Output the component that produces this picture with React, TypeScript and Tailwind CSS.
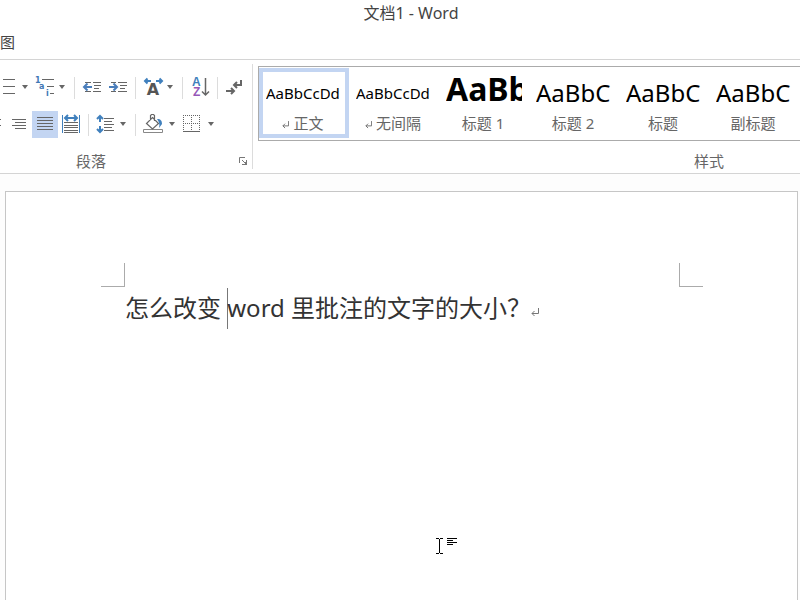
import type { ReactNode } from "react"

const styles = [
  { name: "正文", sample: "AaBbCcDd", size: "text-[15px]", mark: true, active: true },
  { name: "无间隔", sample: "AaBbCcDd", size: "text-[15px]", mark: true },
  { name: "标题 1", sample: "AaBb", size: "pb-2 text-[32px] font-bold" },
  { name: "标题 2", sample: "AaBbC", size: "text-2xl" },
  { name: "标题", sample: "AaBbC", size: "text-2xl" },
  { name: "副标题", sample: "AaBbC", size: "text-2xl" },
]

function Tool({ label, width, active, children }: { label: string; width: number; active?: boolean; children: ReactNode }) {
  return (
    <button type="button" aria-label={label} title={label} className={active ? "shrink-0 bg-[#c3d5f2]" : "shrink-0 hover:bg-[#e3ecf9]"}>
      <svg width={width} height="27" viewBox={`0 0 ${width} 27`} fill="none" stroke="#666" className="block">
        {children}
      </svg>
    </button>
  )
}

function Caret({ x }: { x: number }) {
  return <path d={`M${x} 11h6l-3 4z`} fill="#666" stroke="none" />
}

function Separator() {
  return <span className="mx-1 h-[22px] w-px shrink-0 bg-[#dcdcdc]" />
}

function ReturnMark({ className }: { className: string }) {
  return (
    <svg viewBox="0 0 8 9" className={className} fill="none" stroke="currentColor" aria-hidden="true">
      <path d="M7.5 0v5.5H1M3.5 3L1 5.5 3.5 8" />
    </svg>
  )
}

function ParagraphGroup() {
  return (
    <section aria-label="段落" className="flex w-[252px] shrink-0 flex-col">
      <div className="mt-[14px] flex h-[27px] items-center">
        <Tool label="编号" width={32}>
          <path d="M3 5.5h12M3 12.5h12M3 19.5h12" />
          <Caret x={22} />
        </Tool>
        <Tool label="多级列表" width={38}>
          <path d="M10 5.5h12M15 12.5h7M18 19.5h4" />
          <g fill="#3f78b5" stroke="none" className="font-['DejaVu_Sans'] text-[8px] font-bold">
            <text x="3" y="9">1</text>
            <text x="7" y="15">a</text>
            <text x="14" y="22">i</text>
          </g>
          <Caret x={27} />
        </Tool>
        <Separator />
        <Tool label="减少缩进量" width={26}>
          <path d="M6 8.5h6M14 8.5h8M15 11.5h7M15 14.5h5M6 17.5h6M14 17.5h8" />
          <path d="M5 13h8M8.500 9.500L5 13l3.500 3.500" stroke="#4a7ebb" strokeWidth="2" />
        </Tool>
        <Tool label="增加缩进量" width={26}>
          <path d="M6 8.5h5M13 8.5h9M15 11.5h7M15 14.5h5M6 17.5h5M13 17.5h9" />
          <path d="M4 13h8M8.500 9.500L12 13l-3.500 3.500" stroke="#4a7ebb" strokeWidth="2" />
        </Tool>
        <Separator />
        <Tool label="中文版式" width={38}>
          <path d="M5 7h6M7.500 4.500L5 7l2.500 2.500M16 7h6M19.500 4.500L22 7l-2.500 2.500" stroke="#4080bd" strokeWidth="2" />
          <text x="13" y="21" textAnchor="middle" fill="#555" stroke="none" className="font-['DejaVu_Sans'] text-[16px] font-bold">A</text>
          <Caret x={27} />
        </Tool>
        <Separator />
        <Tool label="排序" width={26}>
          <g stroke="none" className="font-['Liberation_Sans'] text-[12px] font-bold">
            <text x="5" y="12" fill="#4080bd">A</text>
            <text x="6" y="22" fill="#9657b8">Z</text>
          </g>
          <path d="M18.500 4v17M15 17.500l3.500 3.500 3.500-3.500" strokeWidth="1.500" />
        </Tool>
        <Separator />
        <Tool label="显示编辑标记" width={26}>
          <path d="M19 6v5h-7M15 8l-3 3 3 3M4 17h8M9 14l3 3-3 3" strokeWidth="2" />
        </Tool>
      </div>

      <div className="mt-[10px] flex h-[27px] items-center">
        <Tool label="居中" width={6}>
          <path d="M0 8.500h1M0 14.500h1" />
        </Tool>
        <Tool label="右对齐" width={26}>
          <path d="M6 8.500h14M9 11.500h11M6 14.500h14M9 17.500h11" />
        </Tool>
        <Tool label="两端对齐" width={26} active>
          <path d="M5 6.500h16M5 9.500h16M5 12.500h16M5 15.500h16M5 18.500h16" />
        </Tool>
        <Tool label="分散对齐" width={26}>
          <path d="M4.500 4v18M21.500 4v18" stroke="#4080bd" />
          <path d="M7 7h12M10 4L7 7l3 3M16 4l3 3-3 3" stroke="#4080bd" strokeWidth="2" />
          <path d="M6 11.500h14M6 14.500h14M6 16.500h14M6 19.500h14M6 21.500h14" />
        </Tool>
        <Separator />
        <Tool label="行距" width={38}>
          <path d="M11 7.500h10M11 10.500h8M11 13.500h10M11 16.500h8M11 19.500h10" />
          <path d="M7 5v6M4 8l3-3 3 3M7 15v6M4 18l3 3 3-3" stroke="#4080bd" strokeWidth="2" />
          <Caret x={27} />
        </Tool>
        <Separator />
        <Tool label="底纹" width={38}>
          <path d="M3.500 18.500h19v3h-19z" stroke="#888" />
          <path d="M12.500 6.500l6 6-6 5.500-6-5.500zM10.500 9V4.500l1-1h2l1 1V10" strokeWidth="1.200" />
          <path d="M17 8c4 0 5 2 5 5l-3 4c1-4 0-6-2-9z" fill="#4080bd" stroke="none" />
          <Caret x={29} />
        </Tool>
        <Tool label="边框" width={38}>
          <path d="M5 4.500h17M5 12.500h17M5.500 4v16M13.500 4v16M21.500 4v16" strokeDasharray="1 1" />
          <path d="M5 20.500h17" />
          <Caret x={30} />
        </Tool>
      </div>

      <footer className="mt-[13px] flex h-5 items-center">
        <span className="w-[182px] text-center text-[15px] text-[#666]">段落</span>
        <button type="button" aria-label="段落设置" className="ml-auto mr-[5px]">
          <svg width="8" height="8" viewBox="0 0 8 8" fill="none" stroke="#777" className="block">
            <path d="M.5 6V.5H6M3 3l3 3" />
            <path d="M7.500 3v5M3 7.500h5M6.500 5v2" />
          </svg>
        </button>
      </footer>
    </section>
  )
}

function StyleGallery() {
  return (
    <section aria-label="样式" className="mt-1 flex h-[105px] w-[908px] shrink-0 flex-col border-l border-[#dcdcdc] pl-[5px]">
      <div className="mt-[2px] flex h-[75px] shrink-0 items-start border border-[#ababab] pt-px">
        {styles.map((s) => (
          <button
            key={s.name}
            type="button"
            aria-pressed={!!s.active}
            className={`h-[70px] w-[90px] shrink-0 border-4 ${s.active ? "border-[#c3d5f2]" : "border-transparent"}`}
          >
            <span className={`ml-[3px] flex h-10 w-[76px] items-center overflow-hidden whitespace-nowrap text-black ${s.size}`}>{s.sample}</span>
            <span className="flex h-5 items-center justify-center gap-1 pr-0.5 text-[15px] text-[#666]">
              {s.mark && <ReturnMark className="mt-1 h-2 w-[7px]" />}
              {s.name}
            </span>
          </button>
        ))}
      </div>
      <footer className="mt-[10px] h-5 text-center text-[15px] leading-5 text-[#666]">样式</footer>
    </section>
  )
}

export default function App() {
  return (
    <div className="relative flex min-h-screen flex-col overflow-hidden bg-[#fdfdfd] font-['Noto_Sans','Noto_Sans_CJK_SC',sans-serif] text-[#444]">
      <header className="flex h-7 items-center justify-center bg-white pb-0.5 pl-[22px] text-base">
        <h1>文档1 - Word</h1>
      </header>
      <nav className="flex h-8 items-center border-b border-[#d4d4d4] bg-white pb-0.5 text-[15px]">
        <a href="#view">图</a>
      </nav>

      <div className="flex h-[114px] overflow-hidden border-b border-[#d4d4d4] bg-white">
        <ParagraphGroup />
        <StyleGallery />
      </div>

      <main className="ml-[5px] mr-[2px] mt-[17px] flex-1 border border-b-0 border-[#c6c6c6] bg-white pl-[95px] pr-[94px] pt-[71px]">
        <div className="flex justify-between">
          <span className="size-6 border-b border-r border-[#ababab]" />
          <span className="size-6 border-b border-l border-[#ababab]" />
        </div>
        <p className="ml-6 mt-px flex h-[41px] items-center whitespace-pre text-2xl text-[#333]">
          <span className="pb-0.5">怎么改变 </span>
          <span className="-mr-px h-full w-px bg-[#777]" />
          <span className="pb-0.5">word 里批注的文字的大小？</span>
          <ReturnMark className="mt-2 h-[9px] w-2 text-[#777]" />
        </p>
      </main>

      {/* mouse pointer */}
      <svg width="22" height="16" viewBox="0 0 22 16" stroke="#000" fill="none" className="pointer-events-none absolute left-[436px] top-[538px]">
        <path d="M0 .5h3M4 .5h3M3.500 1v14M0 15.500h3M4 15.500h3M11 .5h10M11 2.500h6M11 4.500h10M11 6.500h6" />
      </svg>
    </div>
  )
}
